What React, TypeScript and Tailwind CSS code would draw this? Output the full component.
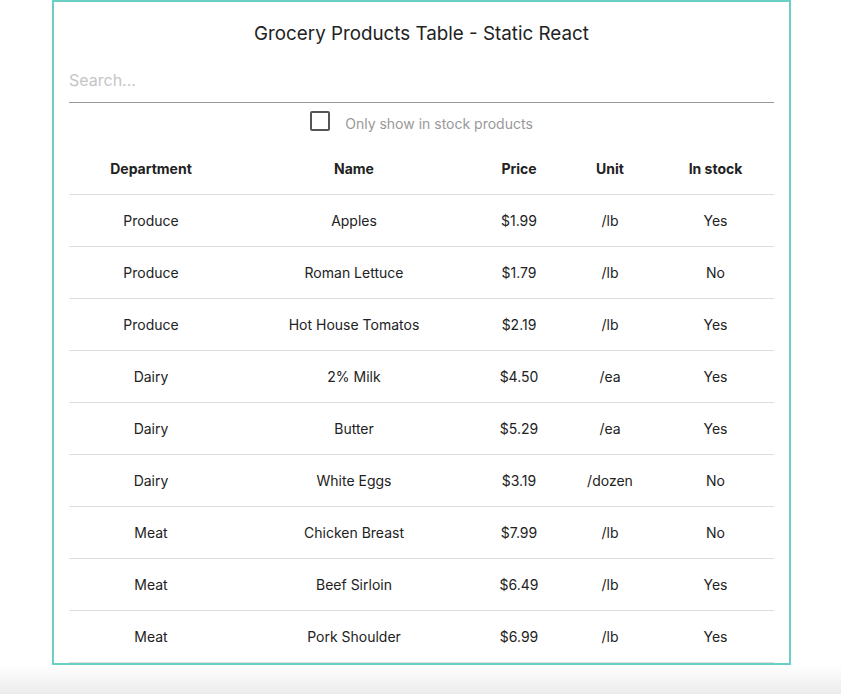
const products = [
  { department: "Produce", name: "Apples", price: "$1.99", unit: "/lb", inStock: true },
  { department: "Produce", name: "Roman Lettuce", price: "$1.79", unit: "/lb", inStock: false },
  { department: "Produce", name: "Hot House Tomatos", price: "$2.19", unit: "/lb", inStock: true },
  { department: "Dairy", name: "2% Milk", price: "$4.50", unit: "/ea", inStock: true },
  { department: "Dairy", name: "Butter", price: "$5.29", unit: "/ea", inStock: true },
  { department: "Dairy", name: "White Eggs", price: "$3.19", unit: "/dozen", inStock: false },
  { department: "Meat", name: "Chicken Breast", price: "$7.99", unit: "/lb", inStock: false },
  { department: "Meat", name: "Beef Sirloin", price: "$6.49", unit: "/lb", inStock: true },
  { department: "Meat", name: "Pork Shoulder", price: "$6.99", unit: "/lb", inStock: true },
];

const cols = "grid grid-cols-[164px_242px_88px_94px_117px] items-center text-center";

export default function App() {
  return (
    <div className="min-h-[694px] bg-white font-['Inter','Noto_Sans',sans-serif] text-[#222]">
      <div className="ml-[52px] w-[739px] border-2 border-[#6ccfc4] px-[15px]">
        <div className="flex h-[64px] items-center justify-center text-[18.8px]">
          Grocery Products Table - Static React
        </div>
        <input
          type="text"
          placeholder="Search..."
          className="block h-[37px] w-full border-b border-[#999] pb-[8px] text-[16px] outline-none placeholder:text-[#c5c5c5]"
        />
        <div className="flex h-[40px] items-start justify-center gap-[15px] pt-[8px]">
          <span className="block h-[20px] w-[20px] rounded-[2px] border-2 border-[#555]" />
          <span className="mt-[3px] text-[14px] leading-[20px] text-[#999]">
            Only show in stock products
          </span>
        </div>
        <div className={`${cols} h-[52px] border-b border-[#dedede] text-[14px] font-bold`}>
          <div>Department</div>
          <div>Name</div>
          <div>Price</div>
          <div>Unit</div>
          <div>In stock</div>
        </div>
        {products.map((p) => (
          <div key={p.name} className={`${cols} h-[52px] border-b border-[#dedede] text-[14px]`}>
            <div>{p.department}</div>
            <div>{p.name}</div>
            <div>{p.price}</div>
            <div>{p.unit}</div>
            <div>{p.inStock ? "Yes" : "No"}</div>
          </div>
        ))}
      </div>
      <div className="h-[29px] bg-gradient-to-b from-white to-[#ececec]" />
    </div>
  );
}
